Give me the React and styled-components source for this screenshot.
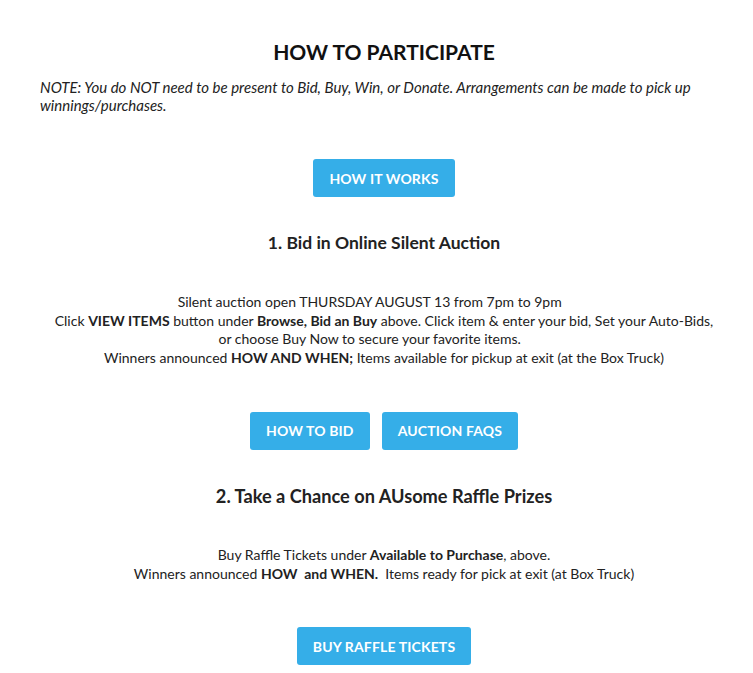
import React from 'react';
import styled, { createGlobalStyle } from 'styled-components';

const GlobalStyle = createGlobalStyle`
  html, body {
    margin: 0;
    padding: 0;
    background: #ffffff;
  }
  body {
    font-family: Lato, "Noto Sans", sans-serif;
    color: #222222;
  }
`;

const Page = styled.main`
  width: 688px;
  margin: 0 0 0 40px;
  padding: 38px 0 8px;
`;

const Title = styled.h1`
  margin: 0;
  font-size: 21px;
  font-weight: 700;
  text-align: center;
  color: #111111;
  line-height: 28px;
`;

const Note = styled.p`
  margin: 12px 0 0;
  font-size: 15px;
  font-style: italic;
  line-height: 18px;
  color: #222222;
`;

const ButtonRow = styled.div`
  display: flex;
  justify-content: center;
  gap: 12px;
  margin-top: ${(p) => p.$top}px;
`;

const Button = styled.a`
  display: inline-flex;
  align-items: center;
  justify-content: center;
  box-sizing: border-box;
  height: 38px;
  min-width: ${(p) => p.$min || 0}px;
  padding: 0 16px;
  border-radius: 3px;
  background: #35aee8;
  color: #ffffff;
  font-size: 14px;
  font-weight: 700;
  text-decoration: none;
  letter-spacing: 0.01em;
`;

const StepTitle = styled.h2`
  margin: ${(p) => p.$top}px 0 0;
  font-size: ${(p) => p.$size}px;
  font-weight: 700;
  line-height: 22px;
  text-align: center;
  color: #222222;
`;

const Body = styled.div`
  margin-top: ${(p) => p.$top}px;
  font-size: 14px;
  line-height: 18.7px;
  text-align: center;
  color: #222222;
  b {
    font-weight: 700;
  }
`;

const Pad = '\u00a0'.repeat(8);

export default function App() {
  return (
    <>
      <GlobalStyle />
      <Page>
        <Title>HOW TO PARTICIPATE</Title>
        <Note>
          NOTE: You do NOT need to be present to Bid, Buy, Win, or Donate. Arrangements can be made to pick up
          winnings/purchases.
        </Note>

        <ButtonRow $top={45}>
          <Button href="#">HOW IT WORKS</Button>
        </ButtonRow>

        <StepTitle $top={35} $size={17.5}>1. Bid in Online Silent Auction</StepTitle>
        <Body $top={39}>
          Silent auction open THURSDAY AUGUST 13 from 7pm to 9pm{Pad}
          <br />
          Click <b>VIEW ITEMS</b> button under <b>Browse, Bid an Buy</b> above. Click item &amp; enter your bid, Set your Auto-Bids,
          <br />
          or choose Buy Now to secure your favorite items.{Pad}
          <br />
          Winners announced <b>HOW AND WHEN;</b> Items available for pickup at exit (at the Box Truck)
        </Body>

        <ButtonRow $top={44}>
          <Button href="#" $min={117}>HOW TO BID</Button>
          <Button href="#">AUCTION FAQS</Button>
        </ButtonRow>

        <StepTitle $top={35} $size={18.2}>2. Take a Chance on AUsome Raffle Prizes</StepTitle>
        <Body $top={39}>
          Buy Raffle Tickets under <b>Available to Purchase</b>, above.
          <br />
          Winners announced <b>HOW&nbsp; and WHEN.</b>&nbsp; Items ready for pick at exit (at Box Truck)
        </Body>

        <ButtonRow $top={44}>
          <Button href="#">BUY RAFFLE TICKETS</Button>
        </ButtonRow>
      </Page>
    </>
  );
}
